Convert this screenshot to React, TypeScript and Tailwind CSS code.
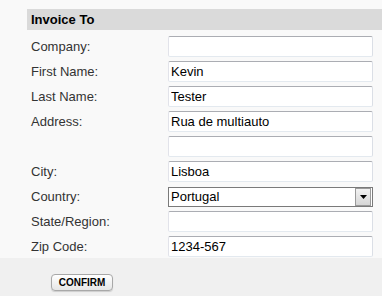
import React from "react";

const rows: { label: string; value?: string; select?: boolean }[] = [
  { label: "Company:", value: "" },
  { label: "First Name:", value: "Kevin" },
  { label: "Last Name:", value: "Tester" },
  { label: "Address:", value: "Rua de multiauto" },
  { label: "", value: "" },
  { label: "City:", value: "Lisboa" },
  { label: "Country:", value: "Portugal", select: true },
  { label: "State/Region:", value: "" },
  { label: "Zip Code:", value: "1234-567" },
];

export default function App() {
  return (
    <div
      className="w-[382px] h-[296px] overflow-hidden text-[13px] text-[#333]"
      style={{ fontFamily: '"Liberation Sans", Arial, sans-serif' }}
    >
      <div className="bg-[#f9f9f9] h-[258px] pt-[9px] pl-[27px]">
        <div className="h-[21px] bg-[#dadada] flex items-center pl-[4px] font-bold text-black">
          Invoice To
        </div>
        <div className="mt-[6px] flex flex-col gap-[4px]">
          {rows.map((r, i) => (
            <div key={i} className="flex items-center h-[21px]">
              <div className="w-[141px] pl-[4px] leading-none">{r.label}</div>
              {r.select ? (
                <div className="w-[205px] h-[20px] border border-[#7a7a7a] bg-white flex items-center justify-between">
                  <span className="pl-[2px] text-black leading-none">{r.value}</span>
                  <div className="w-[16px] h-[18px] mr-px border border-[#9a9a9a] bg-gradient-to-b from-[#f2f2f2] to-[#d6d6d6] flex items-center justify-center">
                    <svg width="7" height="4" viewBox="0 0 7 4">
                      <polygon points="0,0 7,0 3.5,4" fill="#000" />
                    </svg>
                  </div>
                </div>
              ) : (
                <input
                  readOnly
                  defaultValue={r.value}
                  className="w-[205px] h-[21px] bg-white border border-t-[#abadb3] border-l-[#e2e3ea] border-r-[#dbdfe6] border-b-[#e3e9ef] rounded-[2px] px-[2px] text-black text-[13px] outline-none"
                  style={{ fontFamily: '"Liberation Sans", Arial, sans-serif' }}
                />
              )}
            </div>
          ))}
        </div>
      </div>
      <div className="bg-[#f0f0f0] h-[38px] pt-[16px] pl-[51px]">
        <div className="w-[62px] h-[17px] rounded-[4px] border border-[#a8a8a8] bg-gradient-to-b from-white to-[#e6e6e6] shadow-[0_1px_1px_rgba(0,0,0,0.15)] flex items-center justify-center font-bold text-[10px] text-black leading-none">
          CONFIRM
        </div>
      </div>
    </div>
  );
}
